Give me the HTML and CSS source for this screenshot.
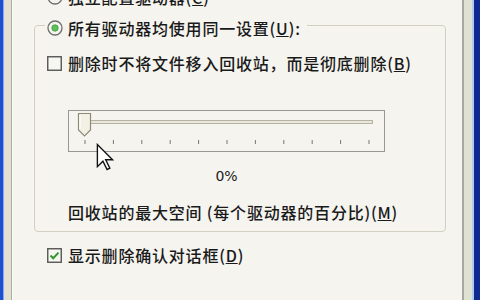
FILE: index.html
```html
<!DOCTYPE html>
<html>
<head>
<meta charset="utf-8">
<link rel="stylesheet" href="styles.css">
</head>
<body>
<div class="window">
  <div class="frame-left"></div>
  <div class="page">
    <div class="row row-top">
      <svg class="radio" viewBox="0 0 16 16" width="16" height="16"><circle cx="8" cy="8" r="7" fill="#f4f4ee" stroke="#6e6e6e" stroke-width="1.3"/></svg>
      <span class="label">独立配置驱动器(<u>C</u>)</span>
    </div>
    <fieldset class="group">
      <legend class="legend">
        <svg class="radio" viewBox="0 0 16 16" width="16" height="16"><circle cx="8" cy="8" r="7" fill="#f6f6f0" stroke="#6e6e6e" stroke-width="1.3"/><circle cx="8" cy="8" r="3.2" fill="#5fbf5a" stroke="#3c9a3c" stroke-width="0.8"/></svg>
        <span class="label">所有驱动器均使用同一设置(<u>U</u>):</span>
      </legend>
      <div class="row">
        <svg class="check" viewBox="0 0 15 15" width="15" height="15"><rect x="0.75" y="0.75" width="13.5" height="13.5" fill="#f7f7f2" stroke="#555" stroke-width="1.4"/></svg>
        <span class="label">删除时不将文件移入回收站，而是彻底删除(<u>B</u>)</span>
      </div>
      <div class="slider-block">
        <svg class="slider" viewBox="0 0 317 42" width="317" height="42">
          <rect x="0.5" y="0.5" width="316" height="41" fill="none" stroke="#3a3a3a" stroke-dasharray="1 1"/>
          <rect x="20.5" y="10.5" width="284" height="3" fill="#e9e7dc" stroke="#b5b3a3"/>
          <g stroke="#777" stroke-width="1">
            <line x1="17" y1="30" x2="17" y2="34"/>
            <line x1="45.4" y1="30" x2="45.4" y2="34"/>
            <line x1="73.8" y1="30" x2="73.8" y2="34"/>
            <line x1="102.2" y1="30" x2="102.2" y2="34"/>
            <line x1="130.6" y1="30" x2="130.6" y2="34"/>
            <line x1="159" y1="30" x2="159" y2="34"/>
            <line x1="187.4" y1="30" x2="187.4" y2="34"/>
            <line x1="215.8" y1="30" x2="215.8" y2="34"/>
            <line x1="244.2" y1="30" x2="244.2" y2="34"/>
            <line x1="272.6" y1="30" x2="272.6" y2="34"/>
            <line x1="301" y1="30" x2="301" y2="34"/>
          </g>
          <polygon points="10.5,3.5 22.5,3.5 22.5,20 16.5,26 10.5,20" fill="#f3f1e4" stroke="#8c8c7c" stroke-width="1.2"/>
          <line x1="12" y1="5" x2="12" y2="19" stroke="#fff" stroke-width="1"/>
        </svg>
        <div class="pct">0%</div>
      </div>
      <div class="caption">回收站的最大空间 (每个驱动器的百分比)(<u>M</u>)</div>
    </fieldset>
    <div class="row row-bottom">
      <svg class="check" viewBox="0 0 15 15" width="15" height="15"><rect x="0.75" y="0.75" width="13.5" height="13.5" fill="#f7f7f2" stroke="#555" stroke-width="1.4"/><path d="M3.5 7.5 L6.2 10.2 L11.5 4.6" fill="none" stroke="#2c9a2c" stroke-width="2"/></svg>
      <span class="label">显示删除确认对话框(<u>D</u>)</span>
    </div>
    <svg class="cursor" viewBox="0 0 13 20" width="18" height="28"><path d="M1 1 L1 17 L5 13 L8 19 L10 18 L7 12 L12 12 Z" fill="#fff" stroke="#111" stroke-width="1" stroke-linejoin="miter"/></svg>
  </div>
  <div class="frame-right"></div>
</div>
</body>
</html>
```
FILE: styles.css
```css
html, body {
  margin: 0;
  padding: 0;
}
body {
  width: 480px;
  height: 300px;
  overflow: hidden;
  font-family: "Noto Sans CJK SC", "Noto Sans", sans-serif;
  font-size: 16px;
  font-weight: 500;
  color: #1a1a1a;
}
.window {
  display: flex;
  height: 300px;
}
.frame-left {
  width: 13px;
  flex: none;
  background: linear-gradient(to right, #1d4fd3 0 3px, #86a8ea 3px 4px, #e2dfd3 4px 11px, #adab9f 11px 12px, #fbfbf8 12px 13px);
}
.frame-right {
  width: 18px;
  flex: none;
  background: linear-gradient(to right, #a9a89f 0 2px, #dfe2d2 2px 10px, #b3caf0 10px 12px, #10298e 12px 18px);
}
.page {
  flex: 1;
  position: relative;
  background: #f5f4ef;
  display: flex;
  flex-direction: column;
  overflow: hidden;
}
.row {
  display: flex;
  align-items: center;
  gap: 6px;
  height: 18px;
  line-height: 18px;
  margin-left: 34px;
}
.row-top {
  margin-top: -12px;
  gap: 5px;
}
.label {
  letter-spacing: 0.8px;
  white-space: nowrap;
}
.radio, .check {
  flex: none;
}
.group {
  margin: 7px 16px 0 21px;
  padding: 17px 0 10px 12px;
  border: 1px solid #d2d0c2;
  border-radius: 4px;
  min-width: 0;
  display: flex;
  flex-direction: column;
}
.legend {
  display: flex;
  align-items: center;
  gap: 5px;
  padding: 6px 6px 0 2px;
  margin-left: -2px;
  line-height: 18px;
}
.group .row {
  margin-left: 0;
}
.slider-block {
  margin: 38px 0 0 21px;
  width: 317px;
  display: flex;
  flex-direction: column;
  align-items: center;
}
.slider {
  display: block;
}
.pct {
  margin-top: 15px;
  font-family: "DejaVu Sans", sans-serif;
  font-size: 14px;
  font-weight: normal;
  line-height: 18px;
}
.caption {
  margin: 18px 0 0 21px;
  line-height: 18px;
  letter-spacing: 0.8px;
  white-space: nowrap;
}
.row-bottom {
  margin-top: 14px;
}
.cursor {
  position: absolute;
  left: 83px;
  top: 143px;
}
```
